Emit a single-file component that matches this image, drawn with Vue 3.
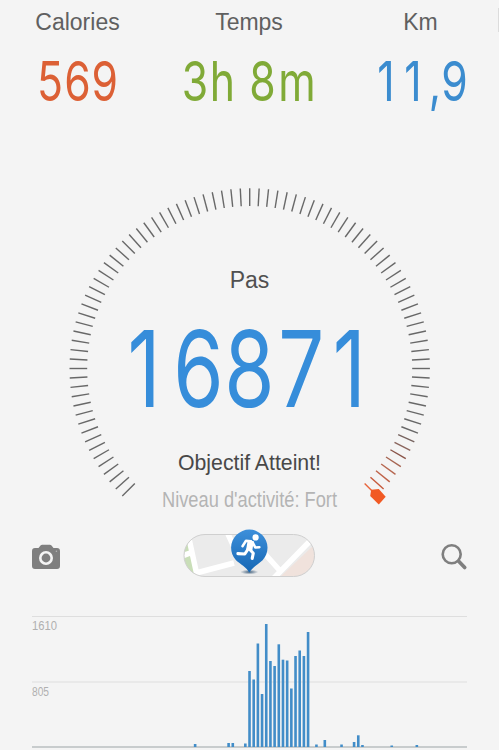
<template>
  <main class="screen">
    <header class="stats">
      <section v-for="stat in stats" :key="stat.label" class="stat">
        <h2 class="stat-label">{{ stat.label }}</h2>
        <svg :class="['stat-value', stat.color]" :width="stat.width" height="60">
          <text :x="spread(stat.centers)" y="54" :transform="`scale(${CONDENSED} 1)`">{{ stat.value }}</text>
        </svg>
      </section>
      <span class="next-page"></span>
    </header>

    <svg class="gauge" width="499" height="350" viewBox="0 170 499 350">
      <line
        v-for="tick in ticks"
        :key="tick.angle"
        x1="249.7"
        y1="188.3"
        x2="249.7"
        y2="206"
        :stroke="tick.color"
        stroke-width="1.4"
        :transform="`rotate(${tick.angle} 249.7 368.5)`"
      />
      <path class="marker" d="M371.2 489.8 378.8 489 385.7 496.8 378.8 504.6 370.2 496Z" />
      <text class="label" x="249.5" y="287.5">Pas</text>
      <text class="steps" :x="spread(stepCenters)" y="406.9" :transform="`scale(${CONDENSED} 1)`">16871</text>
      <text class="goal" x="178" y="470" textLength="143" lengthAdjust="spacingAndGlyphs">Objectif Atteint!</text>
      <text class="level" x="162" y="507.3" textLength="175" lengthAdjust="spacingAndGlyphs">Niveau d'activité: Fort</text>
    </svg>

    <nav class="toolbar">
      <button class="tool">
        <svg width="28" height="26" viewBox="0 0 28 26">
          <path
            fill="#7f7f7f"
            d="M3 4H6.5L8.5 1.5Q9.2.7 10.2.7H17.8Q18.8.7 19.5 1.5L21.5 4H25Q28 4 28 7V22Q28 25 25 25H3Q0 25 0 22V7Q0 4 3 4Z"
          />
          <circle cx="14" cy="14" r="5.7" fill="none" stroke="#f4f4f4" stroke-width="2.6" />
          <circle cx="24.4" cy="7.3" r=".8" fill="#b5b5b5" />
        </svg>
      </button>
      <button class="tool">
        <svg width="134" height="58" viewBox="183 528 134 58">
          <defs>
            <clipPath id="pill"><rect x="184" y="534.5" width="130.5" height="42" rx="21" /></clipPath>
            <linearGradient id="pin" x1="0" y1="0" x2="0" y2="1">
              <stop offset="0" stop-color="#3d8fda" />
              <stop offset="1" stop-color="#1667b4" />
            </linearGradient>
            <radialGradient id="shade">
              <stop offset="0" stop-color="#1b4063" stop-opacity=".8" />
              <stop offset="1" stop-color="#1b4063" stop-opacity="0" />
            </radialGradient>
          </defs>
          <g clip-path="url(#pill)">
            <rect x="183" y="534" width="132" height="43" fill="#ebebeb" />
            <path d="M183 534H190L197 577H183Z" fill="#c9deb8" />
            <path d="M280 577 315 544V577Z" fill="#f0e2dc" />
            <path
              d="M188 534 198 580M182 556 193 552M196 573 234 563M228 534 240 560M265 554 282 573M272 580 312 539"
              fill="none"
              stroke="#fff"
              stroke-width="5.5"
            />
          </g>
          <rect x="184" y="534.5" width="130.5" height="42" rx="21" fill="none" stroke="#cfcfcf" />
          <ellipse cx="249.3" cy="572" rx="9" ry="2.4" fill="url(#shade)" />
          <path
            d="M249.3 572.5C246 567 240.5 564.2 236 560.2A18.2 18.2 0 1 1 262.6 560.2C258.1 564.2 252.6 567 249.3 572.5Z"
            fill="url(#pin)"
          />
          <circle cx="255.6" cy="537.4" r="3.1" fill="#fff" />
          <path
            d="M251 541.2 246 540.8 242.5 546.2M252.8 542.5 255.2 547.4 259.4 547.2"
            fill="none"
            stroke="#fff"
            stroke-width="2.5"
            stroke-linecap="round"
            stroke-linejoin="round"
          />
          <path d="M247.8 540 253.8 541.2 252.3 550.5 246 550Z" fill="#fff" />
          <path
            d="M247.8 549.5 244.8 554 237.9 553.6M249.8 549.5 253.3 553.2 252.2 558.4"
            fill="none"
            stroke="#fff"
            stroke-width="3.1"
            stroke-linecap="round"
            stroke-linejoin="round"
          />
        </svg>
      </button>
      <button class="tool">
        <svg width="28" height="28" viewBox="440 542 28 28">
          <circle cx="451.7" cy="553.3" r="9" fill="none" stroke="#7f7f7f" stroke-width="2.6" />
          <path d="M458.7 560.3 464.7 566.5" stroke="#7f7f7f" stroke-width="3.7" stroke-linecap="round" />
        </svg>
      </button>
    </nav>

    <svg class="chart" width="435" height="140" viewBox="32 610 435 140">
      <path class="grid-line" d="M32 616.5H467M32 682H467" />
      <path class="axis" d="M32 747H467" />
      <text x="32" y="630.3" textLength="25" lengthAdjust="spacingAndGlyphs">1610</text>
      <text x="32" y="695.8" textLength="17" lengthAdjust="spacingAndGlyphs">805</text>
      <rect
        v-for="bar in bars"
        :key="bar.slot"
        :x="bar.x"
        :y="747 - bar.height"
        width="2.6"
        :height="bar.height"
        fill="#428dc8"
      />
    </svg>
  </main>
</template>

<script setup>
// horizontal squeeze applied to the big figures
const CONDENSED = 0.77

const stats = [
  { label: 'Calories', value: '569', width: 82, color: 'orange', centers: [13, 40.5, 67.8] },
  { label: 'Temps', value: '3h 8m', width: 135, color: 'green', centers: [13, 40.5, 60, 80.5, 115] },
  { label: 'Km', value: '11,9', width: 95, color: 'blue', centers: [13, 40, 62, 81.5] },
]

const stepCenters = [144, 198.5, 249.5, 301.3, 349.3]

const spread = (centers) => centers.map((c) => (c / CONDENSED).toFixed(2)).join(' ')

// last ticks turn progressively red near the goal marker
const endColors = ['#76635f', '#8a655d', '#8a5549', '#a66552', '#b66750', '#bf6349', '#c65a3c', '#e8653c']

const ticks = Array.from({ length: 91 }, (_, i) => ({
  angle: -135 + i * 3,
  color: i > 82 ? endColors[i - 83] : '#686868',
}))

// [slot, height]
const activity = [
  [39, 3], [47, 4], [48, 4], [51, 3.5],
  [52, 76], [53, 67.5], [54, 103.5], [55, 53], [56, 123], [57, 86],
  [58, 81], [59, 102.7], [60, 87.3], [61, 86.5], [62, 58.5], [63, 91],
  [64, 96.5], [65, 91], [66, 115],
  [68, 2.5], [70, 7], [74, 2.5], [77, 5], [78, 11.7], [79, 2],
  [86, 1.5], [92, 2],
]

const bars = activity.map(([slot, height]) => ({
  slot,
  height,
  x: 32 + slot * 4.183 - 1.3,
}))
</script>

<style>
body {
  background: #f4f4f4;
}
</style>

<style scoped>
.screen {
  display: flex;
  flex-direction: column;
  width: 499px;
  height: 750px;
  overflow: hidden;
  background: #f4f4f4;
  font-family: "Liberation Sans", Arial, sans-serif;
}

.stats {
  display: grid;
  grid-template-columns: 155px 188px 155px 1px;
  height: 170px;
}

.stat {
  display: flex;
  flex-direction: column;
  align-items: center;
  padding-top: 9px;
}

.stat-label {
  margin: 0;
  font-size: 23px;
  line-height: 26px;
  font-weight: 400;
  color: #606060;
}

.stat-value {
  margin-top: 12px;
  overflow: visible;
  font-family: Inter, sans-serif;
  font-size: 55.5px;
  font-weight: 400;
  text-anchor: middle;
}

.orange {
  fill: #dc6035;
}

.green {
  fill: #80aa37;
}

.blue {
  fill: #3b8ccf;
}

.next-page {
  height: 24px;
  margin-top: 8px;
  background: #dcdcdc;
}

.gauge {
  display: block;
}

.marker {
  fill: #f15a24;
}

.label {
  font-size: 23px;
  text-anchor: middle;
  fill: #505050;
}

.steps {
  font-family: Inter, sans-serif;
  font-size: 105.5px;
  font-weight: 400;
  text-anchor: middle;
  fill: #368dda;
}

.goal {
  font-size: 22px;
  fill: #484848;
}

.level {
  font-size: 21.5px;
  fill: #b4b4b4;
}

.toolbar {
  display: flex;
  justify-content: space-between;
  align-items: center;
  height: 74px;
  padding: 0 31px 0 32px;
}

.tool {
  display: flex;
  padding: 0;
  border: none;
  background: none;
}

.chart {
  display: block;
  margin: 16px 32px 0;
}

.chart text {
  font-size: 12px;
  fill: #b0b0b0;
}

.grid-line {
  stroke: #dedede;
  stroke-width: 1.2;
}

.axis {
  stroke: #c8cccd;
  stroke-width: 1.8;
}
</style>
